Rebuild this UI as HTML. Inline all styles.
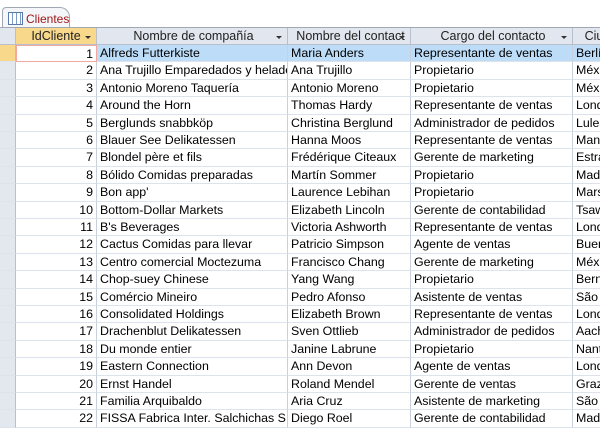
<!DOCTYPE html><html><head><style>
body{margin:0;width:600px;height:421px;overflow:hidden;background:#fff;font-family:"Liberation Sans",sans-serif;font-size:12.4px;position:relative}
.tab{position:absolute;left:2px;top:7px;width:66px;height:21px;border:1px solid #a0a8b4;border-bottom:none;border-radius:4px 10px 0 0;background:#f4f6f9}
.tab span{position:absolute;left:23px;top:4px;color:#a01818;font-size:12px}
.ico{position:absolute;left:5px;top:4px;width:13px;height:11px;border:1px solid #5a7aa8;background:repeating-linear-gradient(90deg,#fff 0 3px,#7a9ac8 3px 4px),#fff}
.line{position:absolute;left:0;right:0;top:27px;height:1px;background:#a0a8b4}
.row{position:absolute;left:0;height:17.4px;width:600px}
.c{position:absolute;top:0;height:100%;box-sizing:border-box;border-right:1px solid #c8d0dc;border-bottom:1px solid #dde3ec;line-height:17px;white-space:nowrap;overflow:hidden;padding-left:3px;color:#000}
.h .c{background:#e2e6ee;border-color:#b8c0cc;text-align:center;color:#222;font-size:12.5px}
.sel{width:16px;left:0;background:#e3e7ee;border-right:1px solid #b8c0cc!important}
.id{left:16px;width:81px;text-align:right;padding-right:3px}
.n{left:97px;width:191px}.p{left:288px;width:123px}.g{left:411px;width:162px}.ci{left:573px;width:40px}
.dd{position:absolute;right:5px;top:8px;border:3px solid transparent;border-top:3px solid #333}
</style></head><body>
<div class="tab"><div class="ico"></div><span>Clientes</span></div>
<div class="line"></div>
<div class="row h" style="top:28px;height:17px">
<div class="c sel"></div>
<div class="c id" style="background:#f8d88a;text-align:center;padding:0">IdCliente<i class="dd"></i></div>
<div class="c n">Nombre de compañía<i class="dd"></i></div>
<div class="c p">Nombre del contact<i class="dd"></i></div>
<div class="c g">Cargo del contacto<i class="dd"></i></div>
<div class="c ci">Ciu</div></div>
<div id="rows"></div>
<script>
var d=[["Alfreds Futterkiste","Maria Anders","Representante de ventas","Berlí"],["Ana Trujillo Emparedados y helados","Ana Trujillo","Propietario","Méx"],["Antonio Moreno Taquería","Antonio Moreno","Propietario","Méx"],["Around the Horn","Thomas Hardy","Representante de ventas","Lond"],["Berglunds snabbköp","Christina Berglund","Administrador de pedidos","Luleå"],["Blauer See Delikatessen","Hanna Moos","Representante de ventas","Mann"],["Blondel père et fils","Frédérique Citeaux","Gerente de marketing","Estra"],["Bólido Comidas preparadas","Martín Sommer","Propietario","Madr"],["Bon app'","Laurence Lebihan","Propietario","Mars"],["Bottom-Dollar Markets","Elizabeth Lincoln","Gerente de contabilidad","Tsaw"],["B's Beverages","Victoria Ashworth","Representante de ventas","Lond"],["Cactus Comidas para llevar","Patricio Simpson","Agente de ventas","Buen"],["Centro comercial Moctezuma","Francisco Chang","Gerente de marketing","Méx"],["Chop-suey Chinese","Yang Wang","Propietario","Bern"],["Comércio Mineiro","Pedro Afonso","Asistente de ventas","São"],["Consolidated Holdings","Elizabeth Brown","Representante de ventas","Lond"],["Drachenblut Delikatessen","Sven Ottlieb","Administrador de pedidos","Aach"],["Du monde entier","Janine Labrune","Propietario","Nant"],["Eastern Connection","Ann Devon","Agente de ventas","Lond"],["Ernst Handel","Roland Mendel","Gerente de ventas","Graz"],["Familia Arquibaldo","Aria Cruz","Asistente de marketing","São"],["FISSA Fabrica Inter. Salchichas S.A.","Diego Roel","Gerente de contabilidad","Madr"]];
var h="";d.forEach(function(r,i){var t=45+i*17.4,f=i==0;var bg=f?"background:#bcdcf8;":"";
h+='<div class="row" style="top:'+t+'px"><div class="c sel" style="'+(f?'background:#f8d88a':'')+'"></div><div class="c id" style="'+(f?'border:1px solid #f0a8a0;':'')+'">'+(i+1)+'</div><div class="c n" style="'+bg+'">'+r[0]+'</div><div class="c p" style="'+bg+'">'+r[1]+'</div><div class="c g" style="'+bg+'">'+r[2]+'</div><div class="c ci" style="'+bg+'">'+r[3]+'</div></div>';});
document.getElementById("rows").innerHTML=h;
</script>
</body></html>
